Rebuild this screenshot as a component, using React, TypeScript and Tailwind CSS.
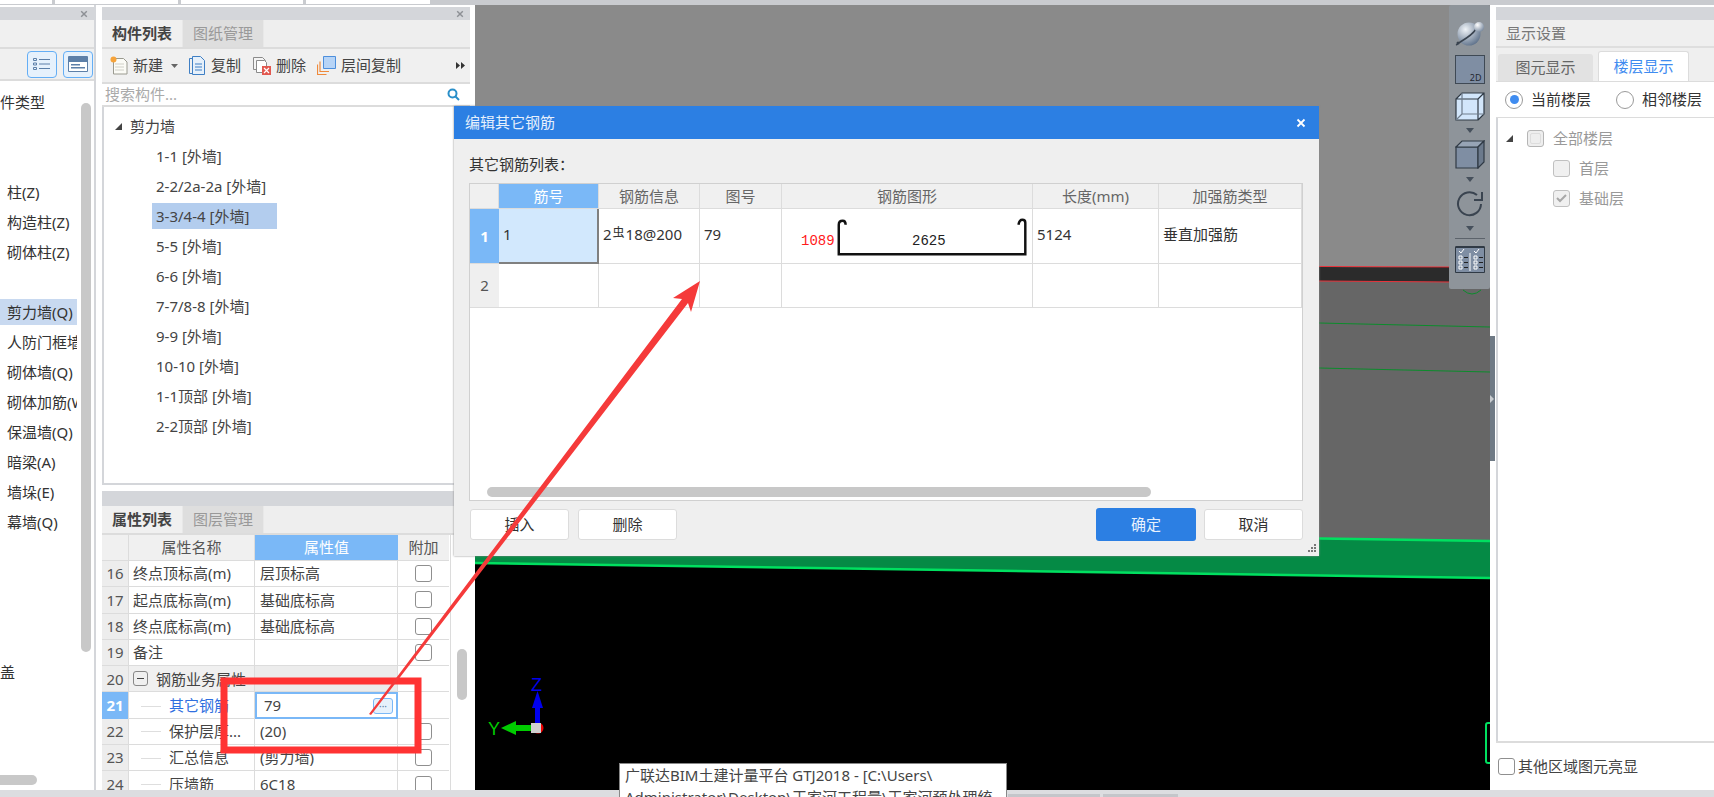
import React from "react";

const leftItems = ["件类型", "", "", "柱(Z)", "构造柱(Z)", "砌体柱(Z)", "", "剪力墙(Q)", "人防门框墙", "砌体墙(Q)", "砌体加筋(W)", "保温墙(Q)", "暗梁(A)", "墙垛(E)", "幕墙(Q)", "", "", "", "", "盖"];
const walls = ["1-1 [外墙]", "2-2/2a-2a [外墙]", "3-3/4-4 [外墙]", "5-5 [外墙]", "6-6 [外墙]", "7-7/8-8 [外墙]", "9-9 [外墙]", "10-10 [外墙]", "1-1顶部 [外墙]", "2-2顶部 [外墙]"];

type PropRow = { n: number; name: string; value: string; check: boolean; child?: boolean; group?: boolean; active?: boolean };
const props: PropRow[] = [
  { n: 16, name: "终点顶标高(m)", value: "层顶标高", check: true },
  { n: 17, name: "起点底标高(m)", value: "基础底标高", check: true },
  { n: 18, name: "终点底标高(m)", value: "基础底标高", check: true },
  { n: 19, name: "备注", value: "", check: true },
  { n: 20, name: "钢筋业务属性", value: "", check: false, group: true },
  { n: 21, name: "其它钢筋", value: "79", check: false, child: true, active: true },
  { n: 22, name: "保护层厚...", value: "(20)", check: true, child: true },
  { n: 23, name: "汇总信息", value: "(剪力墙)", check: true, child: true },
  { n: 24, name: "压墙筋", value: "6C18", check: true, child: true },
];

function CloseX({ className }: { className: string }) {
  return (
    <svg viewBox="0 0 10 10" className={className} fill="none" stroke="currentColor" strokeWidth="1.8">
      <path d="M1.5 1.5l7 7M8.5 1.5l-7 7" />
    </svg>
  );
}

function Caret({ className }: { className: string }) {
  return (
    <svg viewBox="0 0 8 5" className={"w-2 h-[5px] " + className}>
      <path d="M0 0h8L4 5z" fill="#46505c" />
    </svg>
  );
}

function Check({ className = "" }: { className?: string }) {
  return <span className={"block shrink-0 w-[17px] h-[17px] rounded-[3px] border border-[#8f8f8f] bg-white " + className} />;
}

function PanelHeader({ close = true }: { close?: boolean }) {
  return (
    <div className="mt-[2px] h-[13px] bg-[#d4d6da] flex items-center justify-end pr-[6px] text-[#8d9095]">
      {close && <CloseX className="w-[8px] h-[8px]" />}
    </div>
  );
}

function LeftPanel() {
  return (
    <div className="w-[96px] shrink-0 flex flex-col border-r-2 border-[#d4d6da]">
      <PanelHeader />
      <div className="h-[27px] bg-[#f0f0f0] border-b-2 border-[#dcdcdc] box-content" />
      <div className="h-[32px] bg-[#f0f0f0] border-b-2 border-[#dcdcdc] flex items-center justify-end gap-[6px] pr-[1px]">
        <div className="w-[30px] h-[27px] rounded-[4px] border border-[#64aef5] bg-[#e6f1fc] flex items-center justify-center">
          <svg viewBox="0 0 18 14" className="w-[18px] h-[14px]" fill="none" stroke="#5c7fa8" strokeWidth="1">
            <path d="M.5 1.5h3v2h-3zM.5 6h3v2h-3zM.5 10.500h3v2h-3zM6 2.500h11M6 7h11M6 11.500h11" />
          </svg>
        </div>
        <div className="w-[30px] h-[27px] rounded-[4px] border border-[#64aef5] bg-[#e6f1fc] flex items-center justify-center">
          <svg viewBox="0 0 20 16" className="w-[20px] h-[16px]">
            <path d="M.5 .5h19v15H.5z" fill="#fff" stroke="#5c7fa8" />
            <path d="M1 1h18v5H1z" fill="#5c7fa8" />
            <path d="M3 8h9v1.500H3zM3 11h14v1.500H3z" fill="#5c7fa8" />
          </svg>
        </div>
      </div>
      <div className="flex-1 relative overflow-hidden bg-white flex">
        <div className="w-[77px] shrink-0 pt-[6px] overflow-hidden">
          {leftItems.map((t, i) => (
            <div key={i} className="h-[30px] flex items-center">
              <span className={"w-full h-[26px] flex items-center whitespace-nowrap text-[15px] text-[#333] " + (i === 7 ? "bg-[#c8d9f0] " : "") + (i === 0 || i === 19 ? "pl-0" : "pl-[7px]")}>
                {t}
              </span>
            </div>
          ))}
        </div>
        <div className="pl-[4px] pt-[22px]">
          <div className="w-[10px] h-[549px] rounded-full bg-[#c8c8c8]" />
        </div>
        <div className="absolute left-0 bottom-[5px] w-[37px] h-[10px] rounded-r-full bg-[#c8c8c8]" />
      </div>
    </div>
  );
}

function TabStrip({ a, b }: { a: string; b: string }) {
  return (
    <div className="h-[27px] flex bg-[#eeeeee] border-b-2 border-[#dcdcdc] box-content">
      <div className="w-[80px] flex items-center justify-center text-[15px] font-bold text-[#444] bg-[#f0f0f0]">{a}</div>
      <div className="w-[82px] flex items-center justify-center text-[15px] text-[#999] bg-[#dedede] border-x border-[#e8e8e8]">{b}</div>
    </div>
  );
}

function ComponentToolbar() {
  return (
    <div className="h-[35px] bg-[#f0f0f0] border-b-2 border-[#dcdcdc] flex items-center pl-[8px] text-[15px] text-[#444]">
      <svg viewBox="0 0 18 19" className="w-[18px] h-[19px] shrink-0">
        <path d="M3.500 2.500h10l3.500 3.500v12H3.500z" fill="#fbfbf6" stroke="#9a9a90" />
        <path d="M5 8h9M5 11h9M5 14h9" stroke="#d0d0c8" />
        <circle cx="3.500" cy="3.500" r="3" fill="#f6a33a" />
      </svg>
      <span className="ml-[5px]">新建</span>
      <svg viewBox="0 0 7 4" className="ml-[8px] w-[7px] h-[4px] shrink-0"><path d="M0 0h7L3.500 4z" fill="#666" /></svg>
      <svg viewBox="0 0 16 19" className="ml-[11px] w-[16px] h-[19px] shrink-0" fill="none" stroke="#3f7fc4">
        <path d="M.5 2.500h3M.5 2.500v15h3" />
        <path d="M3.500 .5h8l4 4v14h-12z" fill="#e6f0fa" />
        <path d="M6 8h7M6 11h7M6 14h7" />
      </svg>
      <span className="ml-[6px]">复制</span>
      <svg viewBox="0 0 18 18" className="ml-[12px] w-[18px] h-[18px] shrink-0">
        <path d="M.5 .5h9l3 3v9H.5z" fill="#f4f4f4" stroke="#8b8b8b" />
        <path d="M3.500 3.500h8l2 2v10h-10z" fill="#fff" stroke="#8b8b8b" />
        <path d="M9 9h9v9H9z" fill="#e2584f" />
        <path d="M11 11l5 5M16 11l-5 5" stroke="#fff" strokeWidth="1.200" />
      </svg>
      <span className="ml-[5px]">删除</span>
      <svg viewBox="0 0 19 19" className="ml-[11px] w-[19px] h-[19px] shrink-0">
        <path d="M.5 8.500v10h9" fill="none" stroke="#ef8a3c" strokeWidth="1.200" />
        <path d="M3 5.500v10h9" fill="none" stroke="#ef8a3c" strokeWidth="1.200" />
        <path d="M6.500 .5h12v12h-12z" fill="#b7d4f6" stroke="#4d8fdc" />
      </svg>
      <span className="ml-[5px]">层间复制</span>
      <svg viewBox="0 0 9 7" className="ml-[55px] w-[9px] h-[7px] shrink-0"><path d="M0 0l4 3.500L0 7zM5 0l4 3.500L5 7z" fill="#333" /></svg>
    </div>
  );
}

function WallTree() {
  return (
    <div className="h-[378px] bg-white border-x-2 border-b-2 border-[#d4d6da] pt-[5px] text-[15px] text-[#444]">
      <div className="h-[29px] flex items-center pl-[11px] gap-[8px]">
        <svg viewBox="0 0 7 7" className="w-[7px] h-[7px]"><path d="M7 0v7H0z" fill="#444" /></svg>
        <span>剪力墙</span>
      </div>
      {walls.map((w, i) => (
        <div key={w} className="h-[30px] flex items-center pl-[48px]">
          <span className={"w-[125px] h-[26px] pl-[4px] flex items-center whitespace-nowrap " + (i === 2 ? "bg-[#b3cdee]" : "")}>{w}</span>
        </div>
      ))}
    </div>
  );
}

function PropRowView({ r }: { r: PropRow }) {
  const valueClass = r.active
    ? "border-2 border-[#7ab8f7] pl-[7px] justify-between pr-[3px]"
    : "border-r border-[#dcdcdc] pl-[5px] " + (r.group ? "bg-[#ececec]" : "");
  return (
    <div className="grid grid-cols-[27px_126px_143px_51px] h-[26.300px] border-b border-[#dcdcdc] text-[15px] text-[#444]">
      <div className={"flex items-center justify-center border-r border-[#dcdcdc] " + (r.active ? "bg-[#7ab8f7] text-white font-bold" : "bg-[#ededed] text-[#555]")}>{r.n}</div>
      <div className={"relative flex items-center overflow-hidden whitespace-nowrap border-r border-[#dcdcdc] " + (r.group ? "bg-[#f0f0f0] pl-[4px]" : r.child ? "pl-[40px]" : "pl-[4px]")}>
        {r.group && (
          <span className="w-[15px] h-[15px] shrink-0 mr-[8px] rounded-[3px] border border-[#888] flex items-center justify-center">
            <span className="block w-[7px] h-px bg-[#444]" />
          </span>
        )}
        {r.child && <span className="absolute left-[12px] top-1/2 w-[20px] h-px bg-[#dedede]" />}
        <span className={r.active ? "text-[#2f6fe0]" : ""}>{r.name}</span>
      </div>
      <div className={"flex items-center " + valueClass}>
        <span>{r.value}</span>
        {r.active && (
          <span className="w-[20px] h-[16px] rounded-[3px] border border-[#7ab8f7] bg-[#e6f1fc] flex items-center justify-center text-[#5c7fa8] text-[10px] leading-none">
            ···
          </span>
        )}
      </div>
      <div className="flex items-center justify-center">{r.check && <Check />}</div>
    </div>
  );
}

function MiddlePanel() {
  return (
    <div className="w-[368px] ml-[6px] shrink-0 flex flex-col">
      <PanelHeader />
      <TabStrip a="构件列表" b="图纸管理" />
      <ComponentToolbar />
      <div className="h-[23px] bg-white border-b-2 border-[#dcdcdc] flex items-center justify-between pl-[3px] pr-[10px] text-[15px] text-[#aaa]">
        <span>搜索构件...</span>
        <svg viewBox="0 0 13 13" className="w-[13px] h-[13px]" fill="none" stroke="#2a8fc9" strokeWidth="2">
          <circle cx="5.500" cy="5.500" r="4" />
          <path d="M8.500 8.500l3.500 3.500" />
        </svg>
      </div>
      <WallTree />
      <div className="mt-[6px] h-[15px] bg-[#d4d6da]" />
      <TabStrip a="属性列表" b="图层管理" />
      <div className="flex-1 flex overflow-hidden bg-white">
        <div className="w-[347px] shrink-0">
          <div className="grid grid-cols-[27px_126px_143px_51px] h-[26px] text-[15px] text-[#555] bg-[#f0f0f0] border-b border-[#dcdcdc]">
            <div className="border-r border-[#dcdcdc]" />
            <div className="flex items-center justify-center border-r border-[#dcdcdc]">属性名称</div>
            <div className="flex items-center justify-center bg-[#7ab8f7] text-white">属性值</div>
            <div className="flex items-center justify-center">附加</div>
          </div>
          {props.map((r) => <PropRowView key={r.n} r={r} />)}
        </div>
        <div className="pl-[6px] pt-[114px] border-l border-[#dcdcdc] ml-[1px]">
          <div className="w-[10px] h-[51px] rounded-full bg-[#c8c8c8]" />
        </div>
      </div>
    </div>
  );
}

function Viewport() {
  return (
    <svg viewBox="475 5 1015 785" className="absolute inset-0 w-[1015px] h-[785px]">
      <rect x="475" y="5" width="1015" height="785" fill="#000" />
      <rect x="475" y="5" width="1015" height="262" fill="#8a8a8a" />
      <polygon points="475,262 1490,268 1490,541 475,526" fill="#666" />
      <polygon points="1319,267 1450,268 1450,282 1319,281" fill="#2b2b2b" />
      <path d="M475 263L1450 267M1319 281L1450 282" stroke="#e8343c" strokeWidth="1.200" />
      <path d="M1319 323L1490 327M1319 368L1490 372" stroke="#0c8c2c" strokeWidth="1" />
      <polygon points="475,526 1490,541 1490,578 475,563" fill="#058a45" />
      <path d="M475 526L1490 541M475 563L1490 578" stroke="#00e060" strokeWidth="2.500" />
      <path d="M1490 723h-2a2 2 0 0 0-2 2v36a2 2 0 0 0 2 2h2" fill="none" stroke="#00e060" strokeWidth="2" />
      <path d="M1463 290q9 8 18 0" fill="none" stroke="#0c8c2c" strokeWidth="1" />
      <circle cx="538" cy="728" r="5.500" fill="#f00000" />
      <rect x="535" y="705" width="5" height="20" fill="#0000ee" />
      <polygon points="537.500,691 532,708 543,708" fill="#0000ee" />
      <rect x="512" y="725" width="20" height="6" fill="#00cc00" />
      <polygon points="501,728 516,721 516,735" fill="#00cc00" />
      <rect x="531" y="723" width="10" height="10" fill="#d0d0d0" />
      <text x="531" y="691" fontSize="18" fill="#0000ee" fontFamily="Liberation Sans">Z</text>
      <text x="488" y="735" fontSize="18" fill="#00cc00" fontFamily="Liberation Sans">Y</text>
    </svg>
  );
}

function ViewToolbar() {
  return (
    <div className="absolute left-[974px] top-0 w-[41px] h-[284px] bg-[#8e949a] flex flex-col items-center pt-[15px] rounded-[2px]">
      <svg viewBox="0 0 30 26" className="w-[30px] h-[26px] shrink-0">
        <defs>
          <radialGradient id="orb" cx="35%" cy="30%" r="80%"><stop offset="0%" stopColor="#f0f4f8" /><stop offset="100%" stopColor="#566a84" /></radialGradient>
          <radialGradient id="orbSmall" cx="35%" cy="30%" r="80%"><stop offset="0%" stopColor="#ffffff" /><stop offset="100%" stopColor="#6f8198" /></radialGradient>
        </defs>
        <circle cx="14" cy="14" r="11.500" fill="url(#orb)" />
        <path d="M3 24C0 26 2 24 6 21.500C12 18 18 14 21 9" fill="none" stroke="#39434f" strokeWidth="1.500" />
        <circle cx="24" cy="7" r="5" fill="url(#orbSmall)" />
        <circle cx="3" cy="23" r="1.500" fill="#39434f" />
      </svg>
      <div className="mt-[9px] w-[30px] h-[29px] shrink-0 bg-[#7f8ea3] border border-[#3f4954] flex items-end justify-end pr-[2px] text-[9px] leading-[11px] text-[#1f2730]">2D</div>
      <svg viewBox="0 0 30 29" className="mt-[8px] w-[30px] h-[29px] shrink-0" fill="none" stroke="#303a45" strokeWidth="1.200">
        <path d="M1 7h22v21H1zM1 7l6-6h22v21l-6 6M23 7l6-6" fill="#d2e6fb" />
        <path d="M7 1v21h22M7 22l-6 6" stroke="#6e7c8c" />
      </svg>
      <Caret className="mt-[7px] shrink-0" />
      <svg viewBox="0 0 30 29" className="mt-[7px] w-[30px] h-[29px] shrink-0" stroke="#303a45" strokeWidth="1.200">
        <path d="M1 7h22v21H1z" fill="#7f8ea3" />
        <path d="M1 7l6-6h22l-6 6z" fill="#97a4b5" />
        <path d="M23 7l6-6v21l-6 6z" fill="#6c7a8c" />
      </svg>
      <Caret className="mt-[8px] shrink-0" />
      <svg viewBox="0 0 28 28" className="mt-[8px] w-[28px] h-[28px] shrink-0" fill="none" stroke="#3a4450" strokeWidth="2">
        <path d="M25 14a11.500 11.500 0 1 1-4-9" />
        <path d="M26 2v8h-8" />
      </svg>
      <Caret className="mt-[8px] shrink-0" />
      <div className="mt-[7px] w-[30px] h-px shrink-0 bg-[#5c636b]" />
      <svg viewBox="0 0 30 29" className="mt-[5px] w-[30px] h-[29px] shrink-0">
        <path d="M.5 3h29v25.500H.5z" fill="#7f8ea3" stroke="#303a45" />
        <path d="M.5 3h29" stroke="#303a45" strokeWidth="2" />
        <path d="M15 9v18" stroke="#fff" />
        <path d="M4 12h3v3H4zM4 17h3v3H4zM4 22h3v3H4zM19 12h3v3h-3zM19 17h3v3h-3zM19 22h3v3h-3z" fill="none" stroke="#fff" />
        <path d="M9 13.500h4M9 18.500h4M9 23.500h4M24 13.500h4M24 18.500h4M24 23.500h4" stroke="#222" />
        <path d="M4 7l2 2 3-4M19 7l2 2 3-4" fill="none" stroke="#fff" />
      </svg>
    </div>
  );
}

function RightPanel() {
  return (
    <div className="flex-1 ml-[6px] flex flex-col text-[15px]">
      <PanelHeader close={false} />
      <div className="h-[26px] pl-[10px] flex items-center bg-[#efefef] text-[#777] border-b-2 border-[#dedede] box-content">显示设置</div>
      <div className="h-[33px] bg-[#efefef] flex items-end pl-[2px] gap-[5px]">
        <div className="w-[95px] h-[27px] rounded-t-[3px] bg-[#e2e2e2] text-[#666] flex items-center justify-center">图元显示</div>
        <div className="w-[91px] h-[30px] rounded-t-[3px] bg-white border-x border-t border-[#dcdcdc] text-[#3f8cf0] flex items-center justify-center">楼层显示</div>
      </div>
      <div className="h-[37px] bg-white border-y border-[#dcdcdc] flex items-center pl-[9px] text-[#333]">
        <span className="w-[18px] h-[18px] rounded-full border border-[#9a9a9a] flex items-center justify-center"><span className="block w-[9px] h-[9px] rounded-full bg-[#3f8cf0]" /></span>
        <span className="ml-[8px]">当前楼层</span>
        <span className="ml-[25px] w-[18px] h-[18px] rounded-full border border-[#9a9a9a]" />
        <span className="ml-[8px]">相邻楼层</span>
      </div>
      <div className="flex-1 border-l-2 border-[#d4d6da] pt-[11px] text-[#999] bg-white">
        <div className="h-[18px] flex items-center pl-[8px]">
          <svg viewBox="0 0 7 7" className="w-[7px] h-[7px]"><path d="M7 0v7H0z" fill="#444" /></svg>
          <span className="ml-[14px] w-[17px] h-[17px] rounded-[3px] border border-[#b5b5b5] bg-[#eee] flex items-center justify-center"><span className="block w-[11px] h-[11px] rounded-[2px] border border-[#ddd]" /></span>
          <span className="ml-[9px]">全部楼层</span>
        </div>
        <div className="mt-[13px] h-[17px] flex items-center pl-[55px]">
          <span className="w-[17px] h-[17px] rounded-[3px] border border-[#c0c0c0] bg-[#f0f0f0]" />
          <span className="ml-[9px]">首层</span>
        </div>
        <div className="mt-[13px] h-[17px] flex items-center pl-[55px]">
          <span className="w-[17px] h-[17px] rounded-[3px] border border-[#c0c0c0] bg-[#f0f0f0] flex items-center justify-center">
            <svg viewBox="0 0 11 9" className="w-[11px] h-[9px]" fill="none" stroke="#a8a8a8" strokeWidth="2"><path d="M1 4l3 3 6-6" /></svg>
          </span>
          <span className="ml-[9px]">基础层</span>
        </div>
      </div>
      <div className="h-[49px] bg-white border-t-2 border-[#dcdcdc] flex items-center pl-[2px] text-[#444]">
        <Check />
        <span className="ml-[3px]">其他区域图元亮显</span>
      </div>
    </div>
  );
}

function RebarDialog() {
  const headers = ["筋号", "钢筋信息", "图号", "钢筋图形", "长度(mm)", "加强筋类型"];
  const cols = "grid grid-cols-[29px_100px_101px_82px_251px_126px_143px]";
  const cell = "border-r border-b border-[#dcdcdc] flex items-center pl-[4px] pb-[3px]";
  return (
    <div className="absolute left-[454px] top-[106px] w-[865px] h-[450px] bg-[#efefef] flex flex-col text-[15px] text-[#333] shadow-[0_0_2px_#888]">
      <div className="h-[33px] shrink-0 bg-[#2c7fe3] text-[#e6f0fc] flex items-center justify-between pl-[11px] pr-[13px]">
        <span>编辑其它钢筋</span>
        <CloseX className="w-[10px] h-[10px] text-white" />
      </div>
      <div className="pl-[15px] pt-[14px] h-[44px] shrink-0 leading-[22px]">其它钢筋列表：</div>
      <div className="ml-[15px] w-[834px] h-[318px] shrink-0 bg-white border border-[#d0d0d0] overflow-hidden relative">
        <div className={cols + " h-[25px] bg-[#f0f0f0] text-[#666]"}>
          <div className="border-r border-b border-[#dcdcdc]" />
          {headers.map((h, i) => (
            <div key={h} className={"border-r border-b border-[#dcdcdc] flex items-center justify-center " + (i === 0 ? "bg-[#7ab8f7] text-white" : "")}>{h}</div>
          ))}
        </div>
        <div className={cols + " h-[55px]"}>
          <div className="bg-[#7ab8f7] text-white font-bold flex items-center justify-center border-b border-[#dcdcdc]">1</div>
          <div className="bg-[#d2e8fd] border-r-2 border-b-2 border-[#808080] flex items-center pl-[4px] pb-[3px]">1</div>
          <div className={cell + " whitespace-nowrap"}>
            2<span className="text-[12px] relative -top-[2px] mx-[1px]">虫</span>18@200
          </div>
          <div className={cell}>79</div>
          <div className="relative border-r border-b border-[#dcdcdc]">
            <svg viewBox="0 0 251 55" className="absolute inset-0 w-[250px] h-[54px]" fill="none" stroke="#111" strokeWidth="2.500">
              <path d="M63 16q0-4-3-4q-4 0-4 4V46H246V14q0-3-3-3q-3 0-4 5" />
            </svg>
            <span className="absolute left-[19px] top-[22px] font-['Liberation_Mono',monospace] text-[14px] leading-[20px] text-[#ff1a1a]">1089</span>
            <span className="absolute left-[130px] top-[22px] font-['Liberation_Mono',monospace] text-[14px] leading-[20px] text-[#222]">2625</span>
          </div>
          <div className={cell}>5124</div>
          <div className={cell}>垂直加强筋</div>
        </div>
        <div className={cols + " h-[44px]"}>
          <div className="bg-[#efefef] flex items-center justify-center border-b border-[#dcdcdc] text-[#555]">2</div>
          <div className={cell} /><div className={cell} /><div className={cell} /><div className={cell} /><div className={cell} /><div className={cell} />
        </div>
        <div className="absolute left-[17px] bottom-[3px] w-[664px] h-[10px] rounded-full bg-[#c8c8c8]" />
      </div>
      <div className="ml-[16px] mt-[8px] w-[833px] flex justify-between">
        <div className="flex gap-[9px]">
          <button className="w-[99px] h-[31px] bg-white rounded-[3px] border border-[#dcdcdc]">插入</button>
          <button className="w-[99px] h-[31px] bg-white rounded-[3px] border border-[#dcdcdc]">删除</button>
        </div>
        <div className="flex gap-[8px]">
          <button className="w-[100px] h-[33px] -mt-[1px] bg-[#2c7fe3] text-[#e8f1fd] rounded-[3px]">确定</button>
          <button className="w-[99px] h-[31px] bg-white rounded-[3px] border border-[#dcdcdc]">取消</button>
        </div>
      </div>
      <svg viewBox="0 0 9 9" className="absolute right-[3px] bottom-[3px] w-[9px] h-[9px]" fill="#777">
        <path d="M7 0h2v2H7zM4 3h2v2H4zM7 3h2v2H7zM1 6h2v2H1zM4 6h2v2H4zM7 6h2v2H7z" />
      </svg>
    </div>
  );
}

function Annotation() {
  return (
    <svg viewBox="0 0 1714 797" className="absolute inset-0 w-[1714px] h-[797px] pointer-events-none">
      <path d="M224 681h194v69H224z" fill="none" stroke="#ff3333" strokeWidth="7" />
      <polygon points="369,714 371,715 688,303 691,312 700,281 673,298 682,299" fill="#f53a3a" />
    </svg>
  );
}

export default function App() {
  return (
    <div className="relative w-[1714px] h-[797px] overflow-hidden bg-white flex flex-col font-['Noto_Sans','Noto_Sans_CJK_SC',sans-serif]">
      <div className="h-[5px] shrink-0 bg-[#c9cbcf] flex gap-[3px] items-start">
        <div className="w-[52px] h-[4px] bg-white" />
        <div className="w-[123px] h-[4px] bg-white" />
        <div className="w-[122px] h-[4px] bg-white" />
        <div className="w-[124px] h-[4px] bg-white" />
      </div>
      <div className="flex-1 flex min-h-0">
        <LeftPanel />
        <MiddlePanel />
        <div className="relative w-[1015px] ml-[5px] shrink-0">
          <Viewport />
          <ViewToolbar />
          <div className="absolute left-[1015px] top-[331px] w-[5px] h-[125px] bg-[#6f7a85] flex items-center">
            <svg viewBox="0 0 4 8" className="w-[4px] h-[8px]"><path d="M0 0l4 4-4 4z" fill="#c8ccd0" /></svg>
          </div>
        </div>
        <RightPanel />
      </div>
      <div className="h-[7px] shrink-0 bg-[#dcdde0] flex items-end pl-[1008px] gap-[3px]">
        <div className="w-[92px] h-[3px] bg-[#c4c6ca]" />
        <div className="w-[75px] h-[3px] bg-[#c4c6ca]" />
      </div>
      <RebarDialog />
      <div className="absolute left-[619px] top-[763px] w-[388px] h-[40px] bg-white border border-[#888] px-[5px] text-[15px] leading-[22px] text-[#444] whitespace-nowrap overflow-hidden">
        <div>广联达BIM土建计量平台 GTJ2018 - [C:\Users\</div>
        <div>Administrator\Desktop\王家河工程量\王家河预处理统</div>
      </div>
      <Annotation />
    </div>
  );
}
